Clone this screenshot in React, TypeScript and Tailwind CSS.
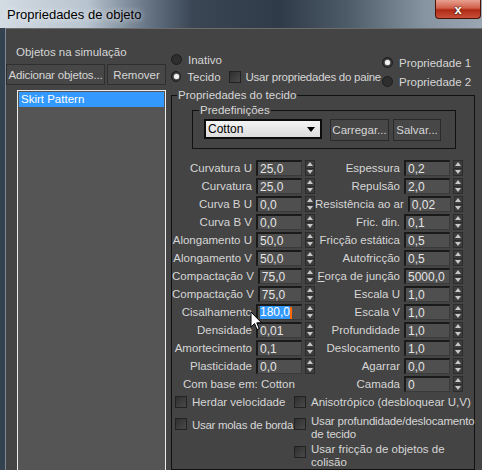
import React from "react";

const font = { fontFamily: "'Liberation Sans', Arial, sans-serif" };

const leftFields: [string, string][] = [
  ["Curvatura U", "25,0"],
  ["Curvatura", "25,0"],
  ["Curva B U", "0,0"],
  ["Curva B V", "0,0"],
  ["Alongamento U", "50,0"],
  ["Alongamento V", "50,0"],
  ["Compactação V", "75,0"],
  ["Compactação V", "75,0"],
  ["Cisalhamento", "180,0"],
  ["Densidade", "0,01"],
  ["Amortecimento", "0,1"],
  ["Plasticidade", "0,0"],
];

const rightFields: [string, string][] = [
  ["Espessura", "0,2"],
  ["Repulsão", "2,0"],
  ["Resistência ao ar", "0,02"],
  ["Fric. din.", "0,1"],
  ["Fricção estática", "0,5"],
  ["Autofricção", "0,5"],
  ["Força de junção", "5000,0"],
  ["Escala U", "1,0"],
  ["Escala V", "1,0"],
  ["Profundidade", "1,0"],
  ["Deslocamento", "1,0"],
  ["Agarrar", "0,0"],
  ["Camada", "0"],
];

function Spinner() {
  return (
    <div className="ml-[3px] flex h-[16px] w-[10px] flex-col border border-[#2c2c2c] bg-[#3d3d3d]">
      <div className="flex flex-1 items-center justify-center border-b border-[#2c2c2c]">
        <svg width="6" height="4" viewBox="0 0 6 4"><path d="M3 0 L6 4 L0 4 Z" fill="#c8c8c8" /></svg>
      </div>
      <div className="flex flex-1 items-center justify-center">
        <svg width="6" height="4" viewBox="0 0 6 4"><path d="M0 0 L6 0 L3 4 Z" fill="#c8c8c8" /></svg>
      </div>
    </div>
  );
}

function Field({ label, value, selected, underline }: { label: string; value: string; selected?: boolean; underline?: boolean }) {
  return (
    <div className="flex h-[18px] items-center justify-end">
      <span className="whitespace-nowrap text-[#d6d6d6]">
        {underline ? (<><span className="underline">F</span>{label.slice(1)}</>) : label}
      </span>
      <div className="ml-[4px] flex h-[16px] w-[46px] items-center border-t-2 border-l-2 border-r border-b border-t-[#1a1a1a] border-l-[#1a1a1a] border-r-[#3a3a3a] border-b-[#3a3a3a] bg-[#4f4f4f] pl-[2px] text-[12px] text-[#e4e4e4]">
        {selected ? (
          <span className="flex items-center">
            <span className="bg-[#3399ff] leading-[13px] text-white">{value}</span>
            <span className="h-[12px] w-[2px] bg-[#ff6a00]" />
          </span>
        ) : (
          value
        )}
      </div>
      <Spinner />
    </div>
  );
}

function Radio({ checked }: { checked?: boolean }) {
  return (
    <div className="flex h-[11px] w-[11px] items-center justify-center rounded-full border border-[#1c1c1c] bg-[#2e2e2e]">
      {checked && <div className="h-[5px] w-[5px] rounded-full bg-[#f2f2f2] shadow-[0_0_2px_#fff]" />}
    </div>
  );
}

function Check() {
  return <div className="h-[12px] w-[12px] shrink-0 border border-[#222] bg-gradient-to-br from-[#2f2f2f] to-[#4a4a4a]" />;
}

export default function App() {
  return (
    <div style={font} className="relative h-[470px] w-[482px] overflow-hidden bg-[#34414f] text-[11.5px] leading-[14px]">
      {/* Title bar */}
      <div className="flex h-[28px] items-start justify-between bg-[linear-gradient(90deg,#d3dbe3_0%,#b8c4cf_18%,#6a7888_30%,#3a4654_40%,#2f3b48_58%,#4d5a67_72%,#8693a0_88%,#9aa6b1_100%)]">
        <span className="pl-[7px] pt-[8px] text-[13px] text-black [text-shadow:0_0_6px_#fff]">Propriedades de objeto</span>
        <div className="mr-[1px] flex h-[19px] w-[46px] items-center justify-center rounded-b-[4px] border border-t-0 border-[#4a1308] bg-[linear-gradient(180deg,#e8a090_0%,#d0604a_45%,#b02a14_55%,#c8503a_100%)]">
          <span className="text-[13px] font-bold leading-none text-white [text-shadow:0_0_2px_#000]">x</span>
        </div>
      </div>

      {/* Body */}
      <div className="flex h-[442px]">
        <div className="w-[6px] border-r border-[#7d8a96]" />
        <div className="flex flex-1 border-t border-[#6c6c6c] bg-[#444444] text-[#d6d6d6]">
          {/* Left column */}
          <div className="flex w-[161px] shrink-0 flex-col">
            <div className="pl-[10px] pt-[16px]">Objetos na simulação</div>
            <div className="mt-[5px] flex">
              <div className="flex h-[21px] w-[99px] items-center justify-center whitespace-nowrap border border-[#2f2f2f] bg-[#474747] tracking-[-0.2px]">Adicionar objetos...</div>
              <div className="ml-[2px] flex h-[21px] w-[59px] items-center justify-center border border-[#2f2f2f] bg-[#474747]">Remover</div>
            </div>
            <div className="ml-[11px] mt-[5px] w-[149px] flex-1 border border-b-0 border-[#ececec] bg-[#555555] p-px">
              <div className="h-[15px] bg-[#3399ff] pl-[2px] leading-[15px] text-white">Skirt Pattern</div>
            </div>
          </div>

          {/* Right area */}
          <div className="flex flex-1 flex-col pl-[4px]">
            <div className="flex h-[75px]">
              <div className="flex w-[210px] flex-col pt-[22px]">
                <div className="flex h-[17px] items-center">
                  <Radio />
                  <span className="ml-[6px]">Inativo</span>
                </div>
                <div className="flex h-[17px] items-center">
                  <Radio checked />
                  <span className="ml-[6px]">Tecido</span>
                  <div className="ml-[8px]"><Check /></div>
                  <span className="ml-[5px] whitespace-nowrap tracking-[-0.25px]">Usar propriedades do paine</span>
                </div>
              </div>
              <div className="flex flex-col pl-[1px] pt-[24px]">
                <div className="flex h-[19px] items-center">
                  <Radio checked />
                  <span className="ml-[6px]">Propriedade 1</span>
                </div>
                <div className="flex h-[19px] items-center">
                  <Radio />
                  <span className="ml-[6px]">Propriedade 2</span>
                </div>
              </div>
            </div>

            {/* Group: Propriedades do tecido */}
            <div className="relative w-[304px] flex-1 border border-[#111] pt-[14px]">
              <span className="absolute left-[5px] top-[-8px] bg-[#444] px-[1px]">Propriedades do tecido</span>
              <div className="relative ml-[20px] h-[39px] w-[264px] border border-[#111]">
                <span className="absolute left-[6px] top-[-8px] bg-[#444] px-[1px]">Predefinições</span>
                <div className="ml-[11px] mt-[8px] flex items-start">
                  <div className="flex h-[20px] w-[118px] items-center justify-between border-2 border-[#0c0c0c] bg-[linear-gradient(180deg,#f4f4f4,#dcdcdc)] pl-[2px] pr-[5px] text-[12px] text-black">
                    <span>Cotton</span>
                    <svg width="8" height="5" viewBox="0 0 8 5"><path d="M0 0 L8 0 L4 5 Z" fill="#000" /></svg>
                  </div>
                  <div className="ml-[8px] flex h-[22px] w-[59px] items-center justify-center border border-[#2a2a2a] bg-[#474747]">Carregar...</div>
                  <div className="ml-[4px] flex h-[22px] w-[48px] items-center justify-center border border-[#2a2a2a] bg-[#474747]">Salvar...</div>
                </div>
              </div>

              <div className="mt-[10px] flex">
                <div className="flex w-[143px] flex-col">
                  {leftFields.map(([l, v], i) => (
                    <Field key={i} label={l} value={v} selected={l === "Cisalhamento"} />
                  ))}
                  <div className="flex h-[18px] items-center pl-[11px]">Com base em: Cotton</div>
                </div>
                <div className="flex w-[148px] flex-col">
                  {rightFields.map(([l, v], i) => (
                    <Field key={i} label={l} value={v} underline={l === "Força de junção"} />
                  ))}
                </div>
              </div>

              <div className="mt-[2px] grid grid-cols-[119px_1fr] pl-[3px]">
                <div className="flex items-center">
                  <Check />
                  <span className="ml-[5px] whitespace-nowrap">Herdar velocidade</span>
                </div>
                <div className="flex items-center">
                  <Check />
                  <span className="ml-[5px] whitespace-nowrap">Anisotrópico (desbloquear U,V)</span>
                </div>
                <div className="mt-[6px] flex items-start pt-[3px]">
                  <Check />
                  <span className="ml-[5px] whitespace-nowrap tracking-[-0.3px]">Usar molas de borda</span>
                </div>
                <div className="mt-[6px] flex items-start">
                  <div className="mt-[3px]"><Check /></div>
                  <span className="ml-[5px] whitespace-nowrap leading-[13px] tracking-[-0.2px]">Usar profundidade/deslocamento<br />de tecido</span>
                </div>
                <div />
                <div className="mt-[2px] flex items-start">
                  <div className="mt-[3px]"><Check /></div>
                  <span className="ml-[5px] whitespace-nowrap leading-[13px]">Usar fricção de objetos de<br />colisão</span>
                </div>
              </div>
            </div>
          </div>
        </div>
      </div>

      {/* Mouse cursor */}
      <svg className="absolute left-[250px] top-[311px]" width="13" height="20" viewBox="0 0 13 20">
        <path d="M1 1 L1 16 L4.5 12.5 L7 18.5 L9.2 17.6 L6.8 11.8 L11.5 11.8 Z" fill="#fff" stroke="#000" strokeWidth="1" />
      </svg>
    </div>
  );
}
